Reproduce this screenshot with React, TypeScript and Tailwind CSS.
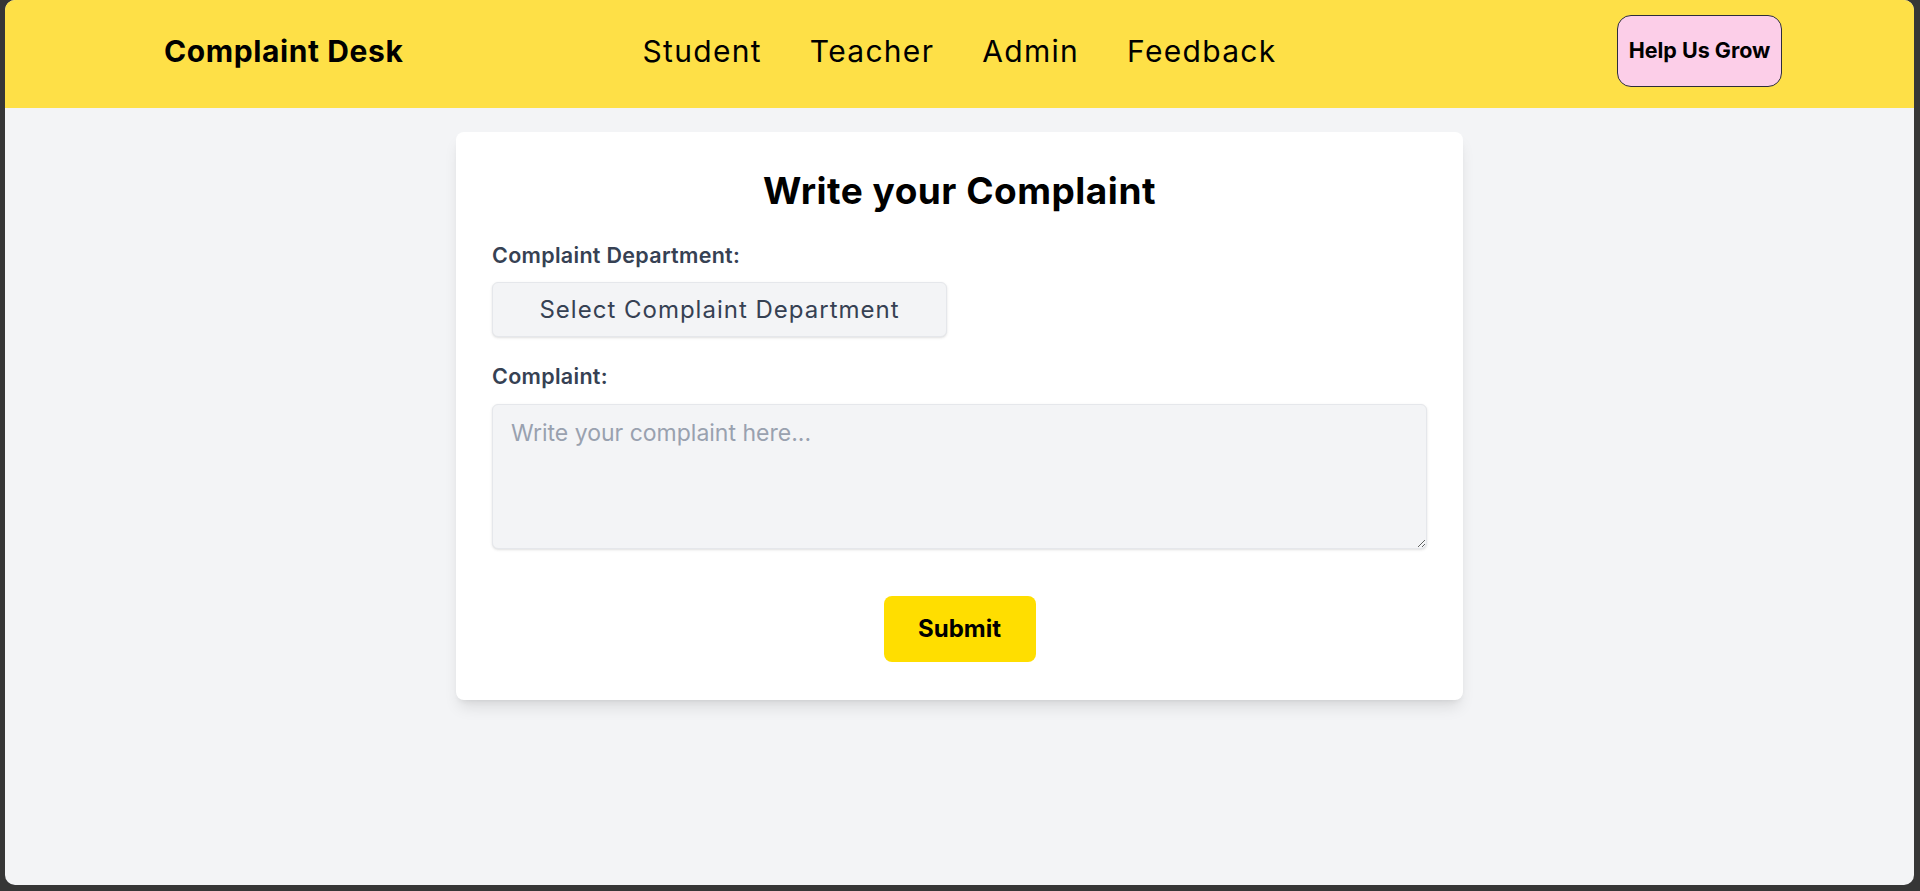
import React from "react";

const navLinks = ["Student", "Teacher", "Admin", "Feedback"];

function Header() {
  return (
    <header className="grid h-[108px] grid-cols-[1fr_auto_1fr] items-center bg-[#fee047] px-[132px] pb-[7px] text-black">
      <div className="ml-[27px] text-[30px] font-bold leading-none tracking-[0.6px]">Complaint Desk</div>
      <nav className="flex gap-[48px] text-[30px] leading-none tracking-[1.3px]">
        {navLinks.map((l) => (
          <a key={l} href="#" className="hover:underline">
            {l}
          </a>
        ))}
      </nav>
      <div className="flex justify-end">
        <button className="h-[72px] w-[165px] rounded-[14px] border border-[#2d2d3a] bg-pink-200 text-[21.5px] font-bold">
          Help Us Grow
        </button>
      </div>
    </header>
  );
}

function ComplaintForm() {
  return (
    <div className="mx-auto w-[1007px] rounded-lg bg-white px-[36px] pt-[37px] pb-[38px] shadow-lg">
      <h1 className="text-center text-[37px] font-bold leading-[44px] tracking-[0.5px] text-black">
        Write your Complaint
      </h1>

      <label className="mt-[28px] block text-[21.5px] font-semibold leading-[28px] tracking-[0.3px] text-gray-700">
        Complaint Department:
      </label>
      <select
        defaultValue=""
        className="mt-[13px] block h-[55px] w-[455px] appearance-none rounded-md border border-gray-200 bg-gray-100 text-center text-[24px] tracking-[1px] text-gray-700 shadow-sm outline-none"
      >
        <option value="">Select Complaint Department</option>
        <option value="academics">Academics</option>
        <option value="hostel">Hostel</option>
        <option value="library">Library</option>
      </select>

      <label className="mt-[25px] block text-[21.5px] font-semibold leading-[28px] tracking-[0.3px] text-gray-700">
        Complaint:
      </label>
      <textarea
        placeholder="Write your complaint here..."
        className="mt-[14px] block h-[145px] w-full rounded-md border border-gray-200 bg-gray-100 px-[18px] pt-[12px] text-[23px] leading-[32px] text-gray-700 shadow-sm outline-none placeholder:text-gray-400"
      />

      <div className="mt-[47px] flex justify-center">
        <button className="h-[66px] w-[152px] rounded-lg bg-[#ffde00] text-[24px] font-bold text-black">Submit</button>
      </div>
    </div>
  );
}

export default function App() {
  return (
    <div className="h-[891px] bg-[#363636] pr-[6px] pb-[6px] pl-[5px] [font-family:Inter,sans-serif]">
      <div className="h-full overflow-hidden rounded-[10px] bg-gray-100">
        <Header />
        <main className="pt-[24px]">
          <ComplaintForm />
        </main>
      </div>
    </div>
  );
}
